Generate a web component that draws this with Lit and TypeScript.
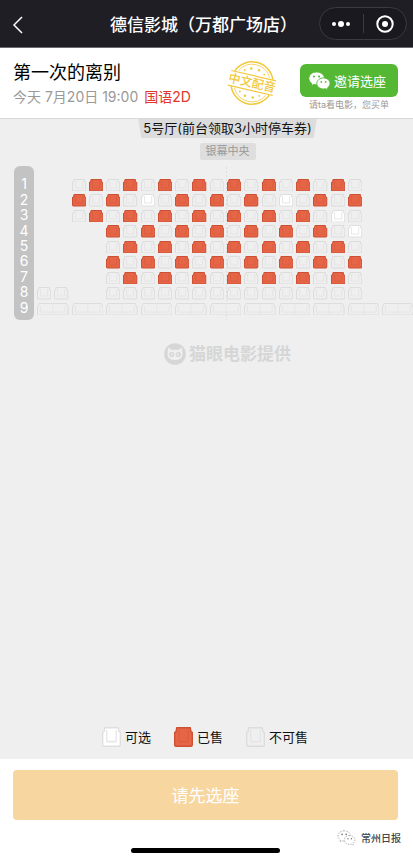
import { LitElement, html, svg, css } from "lit";
import { customElement, property } from "lit/decorators.js";
import { styleMap } from "lit/directives/style-map.js";

type SeatState = "free" | "sold" | "off";

const NAMES: Record<SeatState, string> = { free: "可选", sold: "已售", off: "不可售" };

// x = sold, w = free, - = not for sale, space = no seat
const ROWS = [
  "  -x-x-x-x-x-x-x-x-",
  "  x-x-w-x-x-x-w-x-x",
  "  -x-x-x-x-x-x-x-w-",
  "    x-x-x-x-x-x-x-w",
  "    -x-x-x-x-x-x-x-",
  "    x-x-x-x-x-x-x-x",
  "    -x-x-x-x-x-x-x-",
  "--  ---------------",
];

const STATE: Record<string, SeatState> = { x: "sold", w: "free", "-": "off" };
const DOUBLE_SEATS = 11;

@customElement("seat-icon")
export class SeatIcon extends LitElement {
  @property() state: SeatState = "off";
  @property({ type: Boolean }) wide = false;

  static styles = css`
    :host { display: block; min-height: 0; }
    svg { display: block; width: 100%; height: 100%; }
    path { stroke-width: 1; stroke-linejoin: round; }
    .off { fill: #efefef; stroke: #dcdcdc; }
    .off-in { fill: none; stroke: #e5e5e5; }
    .free { fill: #fff; stroke: #dfdfdf; }
    .free-in { fill: none; stroke: #e8e8e8; }
    .sold { fill: #e76547; stroke: #cc5033; }
    .sold-in { fill: none; stroke: #dc5e41; }
  `;

  render() {
    const s = this.state;
    if (this.wide) {
      return html`<svg viewBox="0 0 32 13" preserveAspectRatio="none" aria-hidden="true">
        <path class=${s} d="M2 .5h28l.5 2.500 1 .5v8q0 1-1 1h-29q-1 0-1-1v-8l1-.5z" />
        <path class="${s}-in" d="M3.500 3v6.500h25V3M16 1v11" />
      </svg>`;
    }
    return html`<svg viewBox="0 0 14 13" preserveAspectRatio="none" aria-hidden="true">
      <path class=${s} d="M2 .5h10l.5 2.500 1 .5v8q0 1-1 1h-11q-1 0-1-1v-8l1-.5z" />
      <path class="${s}-in" d="M3.500 2v7.500h7V2" />
    </svg>`;
  }
}

const wechat = (body: string, eye: string, edge: string) => svg`
  <g fill=${body} stroke=${edge}>
    <path d="M9 1C4.300 1 .8 4 .8 7.800c0 2.200 1.200 4 3.100 5.300L3.200 15.600l2.900-1.500c1 .3 2 .4 3.100.4 4.500 0 8-3 8-6.800S13.500 1 9 1z" />
    <path d="M16.200 7.300c-4 0-7 2.500-7 5.800s3 5.800 7 5.800c.8 0 1.600-.1 2.300-.3l2.400 1.300-.6-2.100c1.700-1.100 2.800-2.800 2.800-4.700 0-3.300-3-5.800-6.900-5.800z" />
  </g>
  <g fill=${eye}>
    <circle cx="6.200" cy="5.700" r="1.100" /><circle cx="11.600" cy="5.700" r="1.100" />
    <circle cx="13.900" cy="11.500" r=".9" /><circle cx="18.500" cy="11.500" r=".9" />
  </g>`;

@customElement("app-root")
export class AppRoot extends LitElement {
  static styles = css`
    :host {
      display: flex;
      flex-direction: column;
      min-height: 100vh;
      background: #fff;
      color: #111;
      font-family: Inter, "Noto Sans CJK SC", sans-serif;
      overflow: hidden;
    }
    * { box-sizing: border-box; }
    button { font: inherit; border: 0; padding: 0; background: none; color: inherit; cursor: pointer; }
    h1, h2, p, ol { margin: 0; padding: 0; font-weight: 400; }
    svg { display: block; }

    .bar {
      display: grid;
      grid-template-columns: 1fr auto 1fr;
      align-items: center;
      height: 48px;
      padding: 0 6px 0 12px;
      background: #1f1e24;
      border-bottom: 1px solid #6b6a6f;
      color: #fff;
    }
    .bar h1 { padding-right: 12px; font: 500 17px/24px "Noto Sans CJK SC", sans-serif; white-space: nowrap; }
    .back { justify-self: start; padding-top: 2px; }
    .capsule {
      justify-self: end;
      display: grid;
      grid-template-columns: 1fr 1px 1fr;
      align-items: center;
      width: 88px;
      height: 33px;
      border: 1px solid #3b3a40;
      border-radius: 17px;
      background: #1a191f;
    }
    .capsule button { display: grid; place-items: center; }
    .capsule i { height: 19px; background: #3b3a40; }

    .info {
      display: flex;
      align-items: flex-start;
      height: 71px;
      padding: 12px 15px 0 13px;
      border-bottom: 1px solid #d8d8d8;
    }
    .film { flex: 1; }
    .film h2 { font-size: 18px; line-height: 25px; color: #000; }
    .film p { font-size: 14px; line-height: 24px; color: #999; white-space: nowrap; }
    .film em { font-style: normal; color: #e0392b; margin-left: 2px; }
    .stamp { width: 50px; height: 46px; margin-right: 23px; }
    .stamp text { font: 500 12px "Noto Sans CJK SC", sans-serif; }
    .invite { display: flex; flex-direction: column; align-items: center; padding-top: 4px; }
    .invite button {
      display: flex;
      align-items: center;
      gap: 3px;
      width: 98px;
      height: 33px;
      padding-left: 8px;
      border-radius: 6px;
      background: #54b835;
      color: #fff;
      font-size: 13px;
    }
    .invite p { font-size: 9px; line-height: 16px; color: #999; }

    main {
      flex: 1;
      display: flex;
      flex-direction: column;
      align-items: center;
      background: #efefef;
    }
    .hall, .screen, .brand { margin-left: 42px; }
    .hall {
      padding: 0 5px;
      font-size: 13px;
      line-height: 19px;
      color: #111;
      background: #dcdcdc;
      clip-path: polygon(0 0, 100% 0, calc(100% - 3px) 100%, 3px 100%);
    }
    .screen {
      margin-top: 5px;
      padding: 0 6px;
      border-radius: 2px;
      background: #dedede;
      color: #999;
      font-size: 11px;
      line-height: 17px;
    }
    .map { align-self: stretch; display: flex; gap: 3px; margin-top: 6px; padding-left: 14px; overflow: hidden; }
    .labels, .grid { display: grid; grid-template-rows: repeat(9, minmax(0, 1fr)); flex: none; height: 154px; }
    .labels {
      width: 20px;
      padding: 10px 0 5px;
      border-radius: 6px;
      background: #c3c3c3;
      color: #fff;
      font-size: 14px;
      list-style: none;
    }
    .labels li { display: grid; place-items: center; line-height: 15px; }
    .grid {
      grid-template-columns: repeat(22, minmax(0, 1fr));
      width: 380px;
      padding: 11px 0 4px;
      background: linear-gradient(#ddd 50%, transparent 50%) 189px 5px / 1px 4px repeat-y;
    }
    .seat { display: grid; grid-template-rows: minmax(0, 1fr); padding: 2px 3px 1px 0; min-height: 0; }
    .wide { grid-row: 9; grid-column: span 2; }

    .brand { display: flex; align-items: center; gap: 3px; margin-top: 22px; margin-bottom: auto; color: #d6d6d6; font-size: 17px; font-weight: 700; line-height: 24px; }
    .legend { display: flex; gap: 23px; margin: 0 3px 12px 0; font-size: 13px; line-height: 20px; color: #111; }
    .legend span { display: flex; align-items: center; gap: 4px; }
    .legend seat-icon { width: 19px; height: 20px; }

    footer { display: flex; flex-direction: column; padding: 11px 15px 3px 13px; }
    .pick { height: 50px; padding-bottom: 2px; border-radius: 4px; background: #f7d69f; color: #fff; font-size: 17px; }
    .source { display: flex; align-items: center; align-self: flex-end; gap: 5px; margin: 10px -3px 0 0; font: 500 10px/16px "Noto Sans CJK SC", sans-serif; color: #444; }
    .home { align-self: center; width: 149px; height: 5px; margin-top: 2px; border-radius: 3px; background: #000; }
  `;

  private seat(row: number, col: number, state: SeatState) {
    return html`<button
      class="seat"
      style=${styleMap({ gridRow: String(row + 1), gridColumn: String(col + 1) })}
      aria-label="${row + 1}排${col + 1}座 ${NAMES[state]}"
      ?disabled=${state !== "free"}
    ><seat-icon state=${state}></seat-icon></button>`;
  }

  render() {
    return html`
      <header class="bar">
        <button class="back" aria-label="返回">
          <svg width="12" height="20" viewBox="0 0 12 20" fill="none" stroke="#fff" stroke-width="1.500"><path d="M10 2 2 10l8 8" /></svg>
        </button>
        <h1>德信影城（万都广场店）</h1>
        <div class="capsule">
          <button aria-label="更多">
            <svg width="20" height="8" viewBox="0 0 20 8" fill="#fff"><circle cx="3" cy="4" r="2" /><circle cx="10" cy="4" r="3" /><circle cx="17" cy="4" r="2" /></svg>
          </button>
          <i></i>
          <button aria-label="关闭">
            <svg width="18" height="18" viewBox="0 0 18 18"><circle cx="9" cy="9" r="7.700" fill="none" stroke="#fff" stroke-width="2" /><circle cx="9" cy="9" r="3" fill="#fff" /></svg>
          </button>
        </div>
      </header>

      <section class="info">
        <div class="film">
          <h2>第一次的离别</h2>
          <p>今天 7月20日 19:00 <em>国语2D</em></p>
        </div>
        <svg class="stamp" viewBox="0 0 50 46" role="img" aria-label="中文配音">
          <g transform="rotate(13 25 23)" fill="none" stroke="#f2c83c">
            <path d="M5.500 15a21 21 0 0 1 39 0M5.500 31a21 21 0 0 0 39 0" stroke-width="1.500" />
            <path d="M9 14a18 18 0 0 1 32 0M9 32a18 18 0 0 0 32 0" stroke-width=".7" />
            <path d="M2 15.500h46M2 30.500h46" stroke-width="1.200" />
            <g fill="#f2c83c" stroke="none">
              <circle cx="21" cy="9" r="1.300" /><circle cx="29" cy="9" r="1.300" /><circle cx="15" cy="12" r=".9" /><circle cx="35" cy="12" r=".9" />
              <circle cx="21" cy="37" r="1.300" /><circle cx="29" cy="37" r="1.300" /><circle cx="15" cy="34" r=".9" /><circle cx="35" cy="34" r=".9" />
              <text x="25" y="27" text-anchor="middle">中文配音</text>
            </g>
          </g>
        </svg>
        <div class="invite">
          <button><svg width="23" height="20" viewBox="0 0 24 21">${wechat("#fff", "#54b835", "#54b835")}</svg>邀请选座</button>
          <p>请ta看电影，您买单</p>
        </div>
      </section>

      <main>
        <p class="hall">5号厅(前台领取3小时停车券)</p>
        <p class="screen">银幕中央</p>
        <div class="map">
          <ol class="labels">${[1, 2, 3, 4, 5, 6, 7, 8, 9].map((n) => html`<li>${n}</li>`)}</ol>
          <div class="grid">
            ${ROWS.map((row, r) => [...row].map((c, i) => (STATE[c] ? this.seat(r, i, STATE[c]) : "")))}
            ${Array.from({ length: DOUBLE_SEATS }, (_, i) => html`<button class="seat wide" disabled aria-label="9排情侣座${i + 1} 不可售"><seat-icon wide></seat-icon></button>`)}
          </div>
        </div>
        <div class="brand">
          <svg width="22" height="22" viewBox="0 0 22 22">
            <circle cx="11" cy="11" r="10.800" fill="#d6d6d6" />
            <path d="M4 4.500 8 7q3-1 6 0l4-2.500.5 6.500q0 6-7.500 6t-7.500-6z" fill="#efefef" />
            <circle cx="7.700" cy="11.500" r="2.500" fill="#d6d6d6" /><circle cx="14.300" cy="11.500" r="2.500" fill="#d6d6d6" />
            <circle cx="7.900" cy="11.500" r="1.100" fill="#efefef" /><circle cx="14.100" cy="11.500" r="1.100" fill="#efefef" />
          </svg>
          猫眼电影提供
        </div>
        <div class="legend">
          ${(["free", "sold", "off"] as SeatState[]).map((s) => html`<span><seat-icon state=${s}></seat-icon>${NAMES[s]}</span>`)}
        </div>
      </main>

      <footer>
        <button class="pick">请先选座</button>
        <div class="source">
          <svg width="19" height="16" viewBox="0 0 24 21" stroke-width=".8" stroke-dasharray="2 1.500">${wechat("#fff", "#777", "#888")}</svg>
          常州日报
        </div>
        <div class="home"></div>
      </footer>
    `;
  }
}
